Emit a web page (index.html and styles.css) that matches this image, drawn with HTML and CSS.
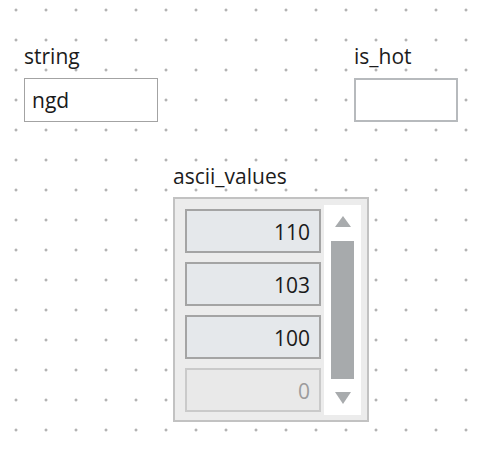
FILE: index.html
```html
<!DOCTYPE html>
<html>
<head>
<meta charset="utf-8">
<link rel="stylesheet" href="styles.css">
</head>
<body>
<div class="canvas">
  <div class="widget w-string">
    <div class="label">string</div>
    <div class="textbox">ngd</div>
  </div>
  <div class="widget w-hot">
    <div class="label">is_hot</div>
    <div class="checkbox"></div>
  </div>
  <div class="widget w-ascii">
    <div class="label">ascii_values</div>
    <div class="listbox">
      <div class="items">
        <div class="item">110</div>
        <div class="item">103</div>
        <div class="item">100</div>
        <div class="item disabled">0</div>
      </div>
      <div class="scroll">
        <svg class="arrow" width="16" height="11" viewBox="0 0 16 11"><polygon points="8,0 16,11 0,11" fill="#a8abad"/></svg>
        <div class="thumb"></div>
        <svg class="arrow down" width="16" height="12" viewBox="0 0 16 12"><polygon points="0,0 16,0 8,12" fill="#a8abad"/></svg>
      </div>
    </div>
  </div>
</div>
</body>
</html>
```
FILE: styles.css
```css
html, body {
  margin: 0;
  padding: 0;
}
body {
  width: 493px;
  height: 457px;
  overflow: hidden;
  background: #ffffff;
  font-family: "Open Sans", "Noto Sans", sans-serif;
  color: #1c1c1c;
}
.canvas {
  position: relative;
  width: 493px;
  height: 457px;
  background-image: radial-gradient(circle, #b3b3b3 0, #b3b3b3 1px, rgba(190,190,190,0.6) 1.4px, rgba(255,255,255,0) 1.9px);
  background-size: 30px 30px;
  background-position: 1px -5px;
}
.widget {
  position: absolute;
  display: flex;
  flex-direction: column;
  gap: 10px;
}
.label {
  font-size: 21px;
  line-height: 24px;
  color: #1c1c1c;
}
.w-string { left: 24px; top: 44px; }
.w-hot { left: 354px; top: 44px; }
.w-ascii { left: 173px; top: 164px; gap: 9px; }

.textbox {
  box-sizing: border-box;
  width: 134px;
  height: 44px;
  border: 1px solid #a3a3a3;
  background: #ffffff;
  padding-left: 7px;
  font-size: 21px;
  line-height: 42px;
  color: #1a1a1a;
}
.checkbox {
  box-sizing: border-box;
  width: 104px;
  height: 44px;
  border: 2px solid #b7babd;
  background: #ffffff;
}
.listbox {
  box-sizing: border-box;
  width: 196px;
  height: 225px;
  border: 2px solid #c2c2c2;
  background: #ececec;
  padding: 6px;
  display: flex;
  gap: 3px;
  overflow: hidden;
}
.items {
  display: flex;
  flex-direction: column;
  gap: 9px;
  padding: 4px 0 0 4px;
  width: 136px;
  flex: none;
}
.item {
  box-sizing: border-box;
  height: 44px;
  flex: none;
  border: 2px solid #a4a4a4;
  background: #e5e8eb;
  text-align: right;
  padding-right: 9px;
  font-size: 21px;
  line-height: 42px;
  color: #1a1a1a;
}
.item.disabled {
  border-color: #cacaca;
  background: #e9e9e9;
  color: #9c9c9c;
}
.scroll {
  width: 37px;
  height: 210px;
  flex: none;
  background: #ffffff;
  display: flex;
  flex-direction: column;
  align-items: center;
  padding-top: 11px;
  box-sizing: border-box;
}
.arrow {
  display: block;
  flex: none;
}
.thumb {
  width: 23px;
  height: 138px;
  background: #a7aaac;
  margin: 14px 0 13px;
  flex: none;
}
```
